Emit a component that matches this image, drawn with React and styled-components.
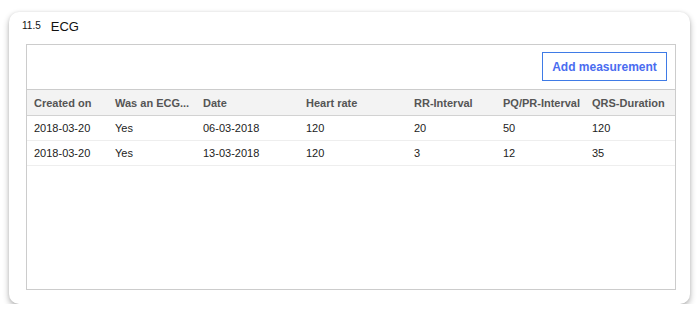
import React from "react";
import styled, { createGlobalStyle } from "styled-components";

const GlobalStyle = createGlobalStyle`
  html, body {
    margin: 0;
    padding: 0;
    background: #ffffff;
    font-family: "Liberation Sans", Arial, sans-serif;
  }
`;

const Page = styled.div`
  padding: 12px 0 0 9px;
`;

const Card = styled.section`
  box-sizing: border-box;
  width: 681px;
  height: 292px;
  display: flex;
  flex-direction: column;
  background: #ffffff;
  border-radius: 10px;
  box-shadow: 0 3px 6px rgba(0, 0, 0, 0.3), 0 0 3px rgba(0, 0, 0, 0.08);
`;

const TitleRow = styled.header`
  box-sizing: border-box;
  height: 32px;
  padding: 5px 0 0 13px;
  display: flex;
  align-items: flex-start;
  gap: 10px;
  color: #111;
`;

const SectionNumber = styled.span`
  font-size: 10px;
  line-height: 18px;
`;

const SectionTitle = styled.h2`
  margin: 0;
  font-size: 13px;
  font-weight: normal;
  line-height: 20px;
`;

const Panel = styled.div`
  flex: 1;
  margin: 0 14px 14px 17px;
  border: 1px solid #cccccc;
  display: flex;
  flex-direction: column;
`;

const Toolbar = styled.div`
  display: flex;
  justify-content: flex-end;
  padding: 7px 8px 8px;
`;

const OutlineButton = styled.button`
  box-sizing: border-box;
  height: 29px;
  width: 125px;
  padding: 0;
  background: #ffffff;
  border: 1px solid #3f7be6;
  color: #4a6cf0;
  font-family: "Liberation Sans", Arial, sans-serif;
  font-size: 12px;
  font-weight: bold;
  cursor: pointer;
`;

const Table = styled.table`
  width: 100%;
  table-layout: fixed;
  border-collapse: collapse;
  font-size: 11px;
`;

const HeadCell = styled.th`
  height: 25px;
  padding: 0 0 0 7px;
  text-align: left;
  font-weight: bold;
  color: #555555;
  background: #f3f3f3;
  border-top: 1px solid #cccccc;
  border-bottom: 1px solid #d2d2d2;
  white-space: nowrap;
`;

const Cell = styled.td`
  height: 24px;
  padding: 0 0 0 7px;
  color: #222222;
  border-bottom: 1px solid #eeeeee;
  white-space: nowrap;
`;

const columns = [
  { key: "created", label: "Created on", width: 81 },
  { key: "performed", label: "Was an ECG...", width: 88 },
  { key: "date", label: "Date", width: 103 },
  { key: "heartRate", label: "Heart rate", width: 108 },
  { key: "rr", label: "RR-Interval", width: 89 },
  { key: "pq", label: "PQ/PR-Interval", width: 89 },
  { key: "qrs", label: "QRS-Duration", width: 90 },
];

const measurements = [
  { created: "2018-03-20", performed: "Yes", date: "06-03-2018", heartRate: "120", rr: "20", pq: "50", qrs: "120" },
  { created: "2018-03-20", performed: "Yes", date: "13-03-2018", heartRate: "120", rr: "3", pq: "12", qrs: "35" },
];

export default function App() {
  return (
    <Page>
      <GlobalStyle />
      <Card>
        <TitleRow>
          <SectionNumber>11.5</SectionNumber>
          <SectionTitle>ECG</SectionTitle>
        </TitleRow>
        <Panel>
          <Toolbar>
            <OutlineButton type="button">Add measurement</OutlineButton>
          </Toolbar>
          <Table>
            <colgroup>
              {columns.map((c) => (
                <col key={c.key} style={{ width: c.width }} />
              ))}
            </colgroup>
            <thead>
              <tr>
                {columns.map((c) => (
                  <HeadCell key={c.key}>{c.label}</HeadCell>
                ))}
              </tr>
            </thead>
            <tbody>
              {measurements.map((row, i) => (
                <tr key={i}>
                  {columns.map((c) => (
                    <Cell key={c.key}>{row[c.key]}</Cell>
                  ))}
                </tr>
              ))}
            </tbody>
          </Table>
        </Panel>
      </Card>
    </Page>
  );
}
